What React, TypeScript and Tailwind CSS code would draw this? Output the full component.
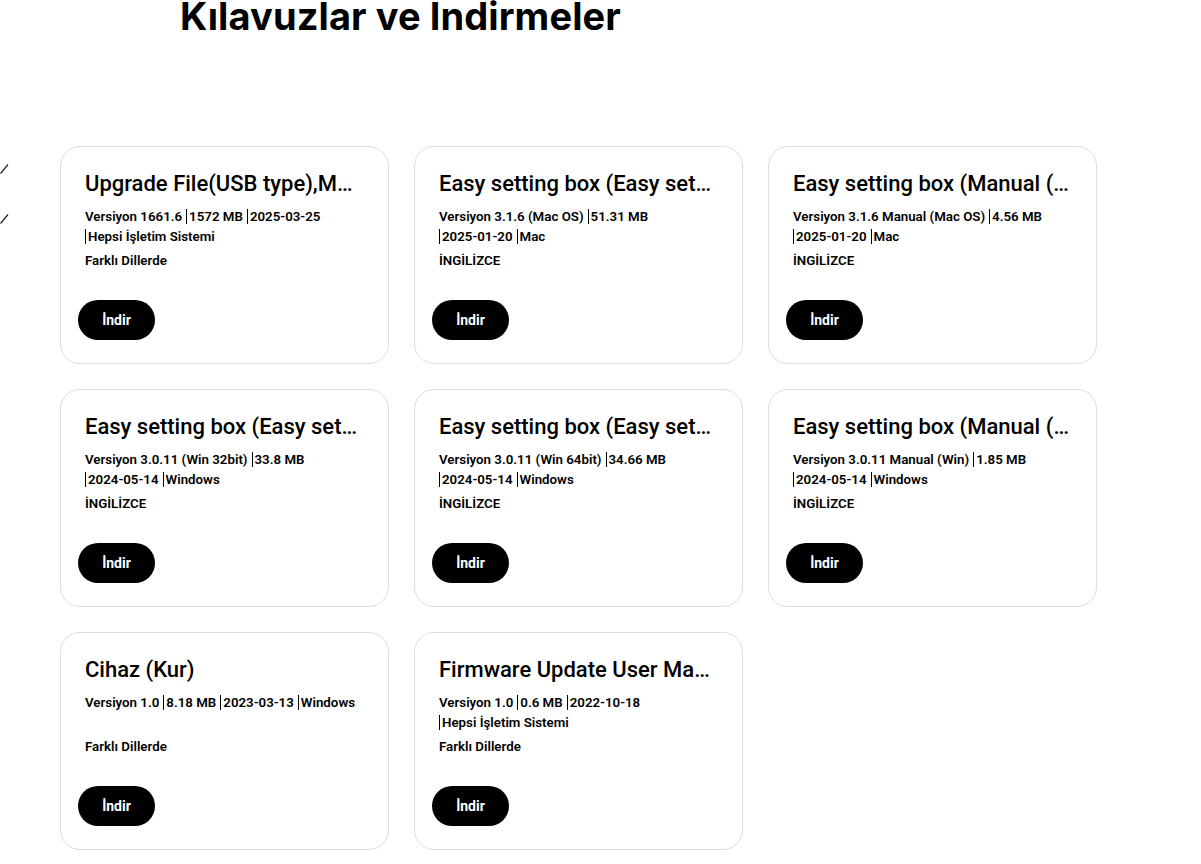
import React from 'react';

interface Download {
  title: string;
  lines: string[][];
  lang: string;
}

const downloads: Download[] = [
  {
    title: 'Upgrade File(USB type),Monitor Firmware',
    lines: [['Versiyon 1661.6', '1572 MB', '2025-03-25'], ['Hepsi İşletim Sistemi']],
    lang: 'Farklı Dillerde',
  },
  {
    title: 'Easy setting box (Easy setting box)',
    lines: [['Versiyon 3.1.6 (Mac OS)', '51.31 MB'], ['2025-01-20', 'Mac']],
    lang: 'İNGİLİZCE',
  },
  {
    title: 'Easy setting box (Manual (Mac OS))',
    lines: [['Versiyon 3.1.6 Manual (Mac OS)', '4.56 MB'], ['2025-01-20', 'Mac']],
    lang: 'İNGİLİZCE',
  },
  {
    title: 'Easy setting box (Easy setting box 32bit)',
    lines: [['Versiyon 3.0.11 (Win 32bit)', '33.8 MB'], ['2024-05-14', 'Windows']],
    lang: 'İNGİLİZCE',
  },
  {
    title: 'Easy setting box (Easy setting box 64bit)',
    lines: [['Versiyon 3.0.11 (Win 64bit)', '34.66 MB'], ['2024-05-14', 'Windows']],
    lang: 'İNGİLİZCE',
  },
  {
    title: 'Easy setting box (Manual (Win))',
    lines: [['Versiyon 3.0.11 Manual (Win)', '1.85 MB'], ['2024-05-14', 'Windows']],
    lang: 'İNGİLİZCE',
  },
  {
    title: 'Cihaz (Kur)',
    lines: [['Versiyon 1.0', '8.18 MB', '2023-03-13', 'Windows']],
    lang: 'Farklı Dillerde',
  },
  {
    title: 'Firmware Update User Manual',
    lines: [['Versiyon 1.0', '0.6 MB', '2022-10-18'], ['Hepsi İşletim Sistemi']],
    lang: 'Farklı Dillerde',
  },
];

function Tick() {
  return (
    <svg width="10" height="12" viewBox="0 0 10 12" className="block">
      <path d="M8 1.5 L0.5 10.5" stroke="#222" strokeWidth="1.2" fill="none" />
    </svg>
  );
}

function DownloadCard({ item }: { item: Download }) {
  return (
    <div className="h-[218px] rounded-[20px] border border-[#dddddd] bg-white px-[24px] pt-[23px]">
      <h3 className="truncate text-[22px] leading-[28px] font-medium text-black">{item.title}</h3>
      <div className="mt-[9px] h-[39px] text-[13.3px] leading-[19.5px] font-semibold text-black">
        {item.lines.map((line, li) => (
          <div key={li} className="whitespace-nowrap">
            {line.map((part, pi) => (
              <span
                key={pi}
                className={
                  li > 0 && pi === 0
                    ? 'border-l border-black pl-[2px]'
                    : pi > 0
                      ? 'ml-[4px] border-l border-black pl-[2px]'
                      : ''
                }
              >
                {part}
              </span>
            ))}
          </div>
        ))}
      </div>
      <p className="mt-[5px] text-[13.3px] leading-[20px] font-semibold text-black">{item.lang}</p>
      <button className="mt-[29px] -ml-[7px] h-[40px] w-[77px] rounded-full bg-black text-[14px] font-bold text-white">
        İndir
      </button>
    </div>
  );
}

export default function App() {
  return (
    <div className="min-h-screen bg-white" style={{ fontFamily: 'Roboto, "Noto Sans", sans-serif' }}>
      <h1
        className="-mt-[7px] pl-[180px] text-[38px] leading-[46px] font-bold tracking-[0.1px] text-black"
        style={{ fontFamily: 'Inter, "DejaVu Sans", sans-serif' }}
      >
        Kılavuzlar ve İndirmeler
      </h1>
      <div className="mt-[107px] flex">
        <div className="w-[60px] shrink-0 pt-[17px]">
          <Tick />
          <div className="mt-[38px]">
            <Tick />
          </div>
        </div>
        <div className="grid w-[1037px] grid-cols-3 gap-x-[25px] gap-y-[25px]">
          {downloads.map((d, i) => (
            <DownloadCard key={i} item={d} />
          ))}
        </div>
      </div>
    </div>
  );
}
